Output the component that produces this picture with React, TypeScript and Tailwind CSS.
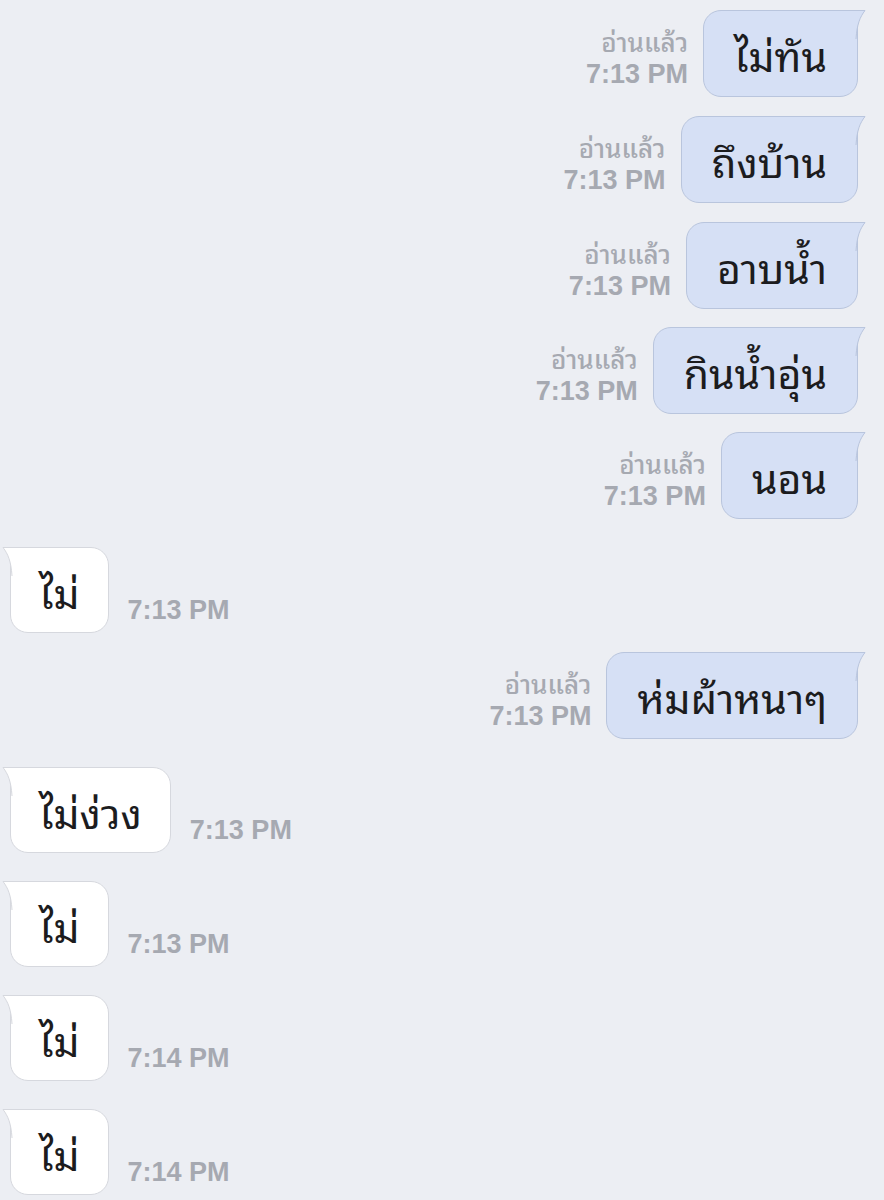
import React from "react";

type Msg = { side: "me" | "them"; text: string; time: string; mt: string };

const msgs: Msg[] = [
  { side: "me", text: "ไม่ทัน", time: "7:13 PM", mt: "mt-[10px]" },
  { side: "me", text: "ถึงบ้าน", time: "7:13 PM", mt: "mt-[19px]" },
  { side: "me", text: "อาบน้ำ", time: "7:13 PM", mt: "mt-[19px]" },
  { side: "me", text: "กินน้ำอุ่น", time: "7:13 PM", mt: "mt-[18px]" },
  { side: "me", text: "นอน", time: "7:13 PM", mt: "mt-[18px]" },
  { side: "them", text: "ไม่", time: "7:13 PM", mt: "mt-[28px]" },
  { side: "me", text: "ห่มผ้าหนาๆ", time: "7:13 PM", mt: "mt-[19px]" },
  { side: "them", text: "ไม่ง่วง", time: "7:13 PM", mt: "mt-[28px]" },
  { side: "them", text: "ไม่", time: "7:13 PM", mt: "mt-[28px]" },
  { side: "them", text: "ไม่", time: "7:14 PM", mt: "mt-[28px]" },
  { side: "them", text: "ไม่", time: "7:14 PM", mt: "mt-[28px]" },
];

const THAI = {
  fontFamily:
    '"Noto Sans Thai Looped", "Noto Sans Thai", "Noto Sans", "Liberation Sans", sans-serif',
};
const LATIN = {
  fontFamily: '"Liberation Sans", Arial, sans-serif',
};

function SentTail() {
  return (
    <svg className="absolute top-[-1px] right-[-10px]" width="12" height="30" viewBox="0 0 12 30">
      <path d="M0 1 L10 1 C5 7 2 14 1 29 L0 29 Z" fill="#d6e0f5" />
      <path d="M0 0.5 L10 0.5 C5 7 2 14 1 29" fill="none" stroke="#b9c5dd" strokeWidth="1" />
    </svg>
  );
}

function RecvTail() {
  return (
    <svg className="absolute top-[-1px] left-[-10px]" width="12" height="30" viewBox="0 0 12 30">
      <path d="M12 1 L2 1 C7 7 10 14 11 29 L12 29 Z" fill="#ffffff" />
      <path d="M12 0.5 L2 0.5 C7 7 10 14 11 29" fill="none" stroke="#d6d8de" strokeWidth="1" />
    </svg>
  );
}

export default function App() {
  return (
    <div className="w-[884px] h-[1200px] bg-[#eceef3] overflow-hidden">
      <div className="flex flex-col">
        {msgs.map((m, i) =>
          m.side === "me" ? (
            <div key={i} className={`${m.mt} flex justify-end items-center pr-[26px]`}>
              <div className="flex flex-col items-end mr-[15px] mt-[7px] text-[#a6a9b1]">
                <span className="text-[26px] font-medium leading-[28px]" style={THAI}>
                  อ่านแล้ว
                </span>
                <span className="text-[27px] font-bold leading-[30px] mt-[5px]" style={LATIN}>
                  {m.time}
                </span>
              </div>
              <div className="relative h-[87px] px-[30px] flex items-center bg-[#d6e0f5] border border-[#b9c5dd] rounded-[18px] rounded-tr-none">
                <span className="text-[41px] font-normal text-[#1c1c1e] leading-none" style={THAI}>
                  {m.text}
                </span>
                <SentTail />
              </div>
            </div>
          ) : (
            <div key={i} className={`${m.mt} flex items-end pl-[10px]`}>
              <div className="relative h-[86px] px-[28px] flex items-center bg-white border border-[#d6d8de] rounded-[18px] rounded-tl-none">
                <span className="text-[41px] font-normal text-[#1c1c1e] leading-none" style={THAI}>
                  {m.text}
                </span>
                <RecvTail />
              </div>
              <span
                className="ml-[19px] mb-[9px] text-[27px] font-bold text-[#a6a9b1] leading-none"
                style={LATIN}
              >
                {m.time}
              </span>
            </div>
          )
        )}
      </div>
    </div>
  );
}
